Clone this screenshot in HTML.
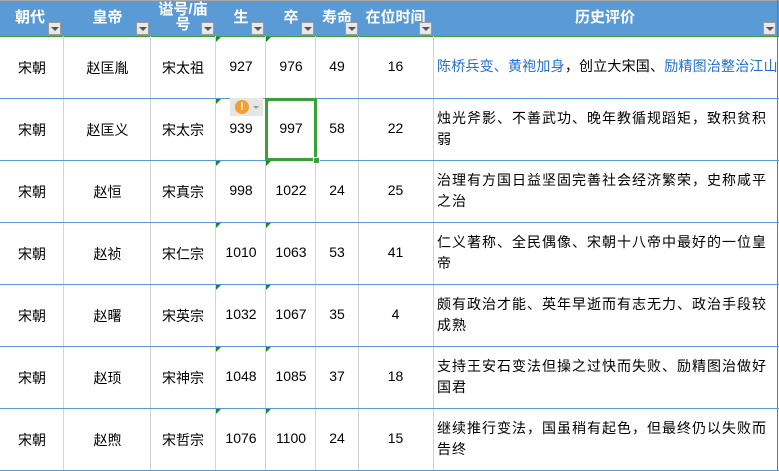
<!DOCTYPE html>
<html><head><meta charset="utf-8"><style>
body{margin:0;width:779px;height:471px;overflow:hidden;background:#fff;font-family:"Liberation Sans","Noto Sans CJK SC",sans-serif;}
.h{position:absolute;top:1px;height:35px;background:#5b9bd5;color:#fff;font-weight:bold;font-size:15px;text-align:center;}
.dd{position:absolute;width:13px;height:13px;background:#e8e8e8;border:1px solid #999;box-sizing:border-box;}
.dd:after{content:"";position:absolute;left:2px;top:4px;border-left:4px solid transparent;border-right:4px solid transparent;border-top:4px solid #555;}
.vl{position:absolute;top:36px;bottom:0;width:1px;background:#d4d4d4;}
.hl{position:absolute;left:0;width:779px;height:1px;background:#5b9bd5;}
.cell{position:absolute;font-size:14px;color:#000;text-align:center;}
.t{position:absolute;left:437px;width:334px;font-size:14px;line-height:21px;letter-spacing:1px;}
.tri{position:absolute;width:0;height:0;border-top:5px solid #1a8a2a;border-right:5px solid transparent;}
</style></head><body>
<div style="position:absolute;left:0;top:0;width:779px;height:1px;background:#aaa"></div>
<div class="h" style="left:0;width:779px"></div>
<div style="position:absolute;left:0;top:36px;width:779px;height:1px;background:#3aa03a"></div>
<div style="position:absolute;left:777px;top:0;width:1px;height:471px;background:#3aa03a"></div>
<div class="h" style="left:0;width:64px;background:none;line-height:30px;top:3px;text-align:left;padding-left:15px">朝代</div>
<div class="h" style="left:64px;width:87px;background:none;line-height:30px;top:3px">皇帝</div>
<div class="h" style="left:151px;width:64px;background:none;line-height:15px;top:2px">谥号/庙<br>号</div>
<div class="h" style="left:216px;width:50px;background:none;line-height:30px;top:3px">生</div>
<div class="h" style="left:266px;width:50px;background:none;line-height:30px;top:3px">卒</div>
<div class="h" style="left:316px;width:42px;background:none;line-height:30px;top:3px">寿命</div>
<div class="h" style="left:358px;width:75px;background:none;line-height:30px;top:3px">在位时间</div>
<div class="h" style="left:433px;width:344px;background:none;line-height:30px;top:3px">历史评价</div>
<div class="dd" style="left:48px;top:22px"></div>
<div class="dd" style="left:136px;top:22px"></div>
<div class="dd" style="left:201px;top:22px"></div>
<div class="dd" style="left:251px;top:22px"></div>
<div class="dd" style="left:301px;top:22px"></div>
<div class="dd" style="left:345px;top:22px"></div>
<div class="dd" style="left:419px;top:22px"></div>
<div class="dd" style="left:763px;top:22px"></div>
<div class="vl" style="left:63px"></div><div class="vl" style="left:150px"></div><div class="vl" style="left:215px"></div><div class="vl" style="left:265px"></div><div class="vl" style="left:315px"></div><div class="vl" style="left:358px"></div><div class="vl" style="left:433px"></div>
<div class="hl" style="top:98px"></div><div class="hl" style="top:160px"></div><div class="hl" style="top:222px"></div><div class="hl" style="top:284px"></div><div class="hl" style="top:346px"></div><div class="hl" style="top:408px"></div><div class="hl" style="top:470px"></div>
<div id="rows"></div>
<script>
var d=[["赵匡胤","宋太祖",927,976,49,16,'<span style="white-space:nowrap;letter-spacing:0.2px"><span style="color:#1f6fd0">陈桥兵变、黄袍加身</span>，创立大宋国、<span style="color:#1f6fd0">励精图治整治江山</span></span>'],
["赵匡义","宋太宗",939,997,58,22,"烛光斧影、不善武功、晚年教循规蹈矩，致积贫积弱"],
["赵恒","宋真宗",998,1022,24,25,"治理有方国日益坚固完善社会经济繁荣，史称咸平之治"],
["赵祯","宋仁宗",1010,1063,53,41,"仁义著称、全民偶像、宋朝十八帝中最好的一位皇帝"],
["赵曙","宋英宗",1032,1067,35,4,"颇有政治才能、英年早逝而有志无力、政治手段较成熟"],
["赵顼","宋神宗",1048,1085,37,18,"支持王安石变法但操之过快而失败、励精图治做好国君"],
["赵煦","宋哲宗",1076,1100,24,15,"继续推行变法，国虽稍有起色，但最终仍以失败而告终"]];
var h="",L=[0,64,151,216,266,316,358],W=[64,87,64,50,50,42,75];
d.forEach(function(r,i){var y=36+i*62;var v=["宋朝",r[0],r[1],r[2],r[3],r[4],r[5]];
for(var k=0;k<7;k++)h+='<div class="cell" style="left:'+L[k]+'px;width:'+W[k]+'px;top:'+(y+22)+'px">'+v[k]+'</div>';
h+='<div class="tri" style="left:216px;top:'+(y+1)+'px"></div><div class="tri" style="left:266px;top:'+(y+1)+'px"></div>';
var one=i==0;h+='<div class="t" style="top:'+(one?y+20:y+10)+'px">'+r[6]+'</div>';});
document.getElementById("rows").innerHTML=h;
</script>
<div style="position:absolute;left:230px;top:98px;width:33px;height:18px;background:#e6e6e6"></div>
<div style="position:absolute;left:235px;top:100px;width:14px;height:14px;border-radius:50%;background:#f0a030;color:#fff;font-size:11px;font-weight:bold;text-align:center;line-height:14px">!</div>
<div style="position:absolute;left:253px;top:106px;border-left:3px solid transparent;border-right:3px solid transparent;border-top:3px solid #999"></div>
<div style="position:absolute;left:265px;top:98px;width:52px;height:63px;border:3px solid #3aa03a;box-sizing:border-box"></div>
<div style="position:absolute;left:313px;top:157px;width:5px;height:5px;background:#3aa03a;border:1px solid #fff"></div>
</body></html>
